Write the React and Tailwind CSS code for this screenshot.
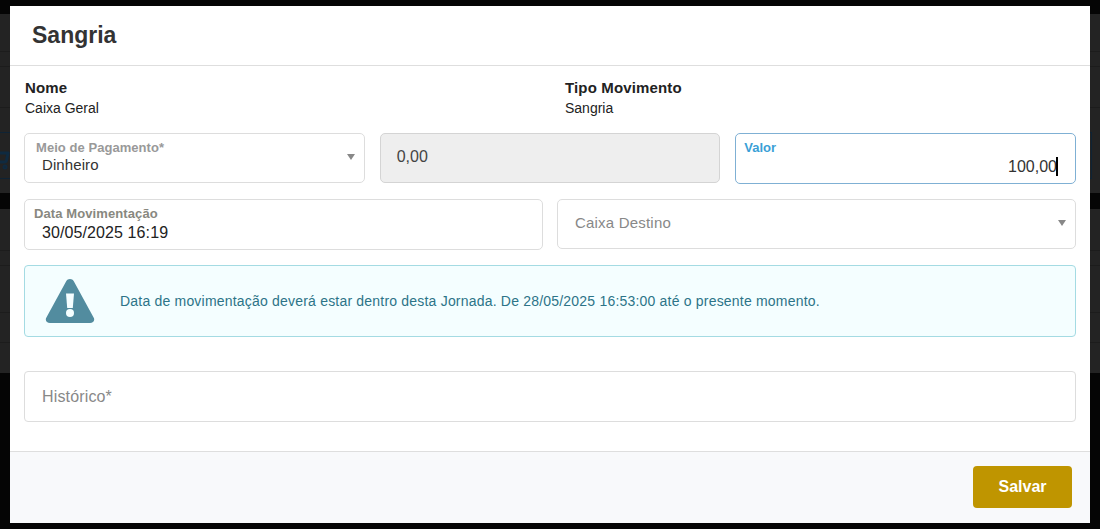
import { ShoppingCart } from "lucide-react";

const Caret = ({ className = "" }) => (
  <svg width="8" height="6" viewBox="0 0 8 6" className={className}>
    <path d="M0 0 H8 L4 6 Z" fill="#888888" />
  </svg>
);

// faixas escuras atras do modal
const bands = [
  "h-[14px] bg-[#050505]",
  "h-[38px] bg-[#232323] border-b border-[#1c1c1c]",
  "h-[15px] bg-[#232323] border-b border-[#1c1c1c]",
  "h-[41px] bg-[#232323] border-b border-[#1c1c1c]",
  "h-[70px] bg-[#232323]",
  "h-[15px] bg-[#232323]",
  "h-[16px] bg-[#050505]",
  "h-[42px] bg-[#232323] border-b border-[#1c1c1c]",
  "h-[15px] bg-[#232323] border-b border-[#1c1c1c]",
  "h-[47px] bg-[#232323] border-b border-[#1c1c1c]",
  "h-[30px] bg-[#232323] border-b border-[#1c1c1c]",
  "h-[30px] bg-[#232323]",
  "h-[156px] bg-[#050505]",
];

const App = () => {
  return (
    <div className="relative h-[529px] w-[1100px] overflow-hidden bg-[#050505] font-['Liberation_Sans',Arial,sans-serif]">
      <div className="absolute inset-0 flex flex-col">
        {bands.map((b, i) => (
          <div key={i} className={b} />
        ))}
      </div>
      <div className="absolute -left-[2px] top-[132px] h-[47px] w-[1094px] border border-[#0f2334]" />
      <ShoppingCart size={24} strokeWidth={3} className="absolute -left-[14px] top-[146px] text-[#0f2a40]" />

      {/* Modal */}
      <div className="absolute left-[10px] top-[6px] flex h-[517px] w-[1080px] flex-col bg-white">
        {/* Header */}
        <div className="flex h-[60px] shrink-0 items-center border-b border-[#dedede] pl-[22px]">
          <h1 className="text-[23px] font-bold leading-none text-[#333]">Sangria</h1>
        </div>

        {/* Body */}
        <div className="flex flex-1 flex-col px-[14px]">
          <div className="mt-[13px] grid grid-cols-2 gap-x-[30px]">
            <div className="pl-px">
              <p className="text-[15px] font-bold leading-[18px] tracking-[0.15px] text-[#222]">Nome</p>
              <p className="mt-[2px] text-[14px] leading-[18px] text-[#222]">Caixa Geral</p>
            </div>
            <div>
              <p className="text-[15px] font-bold leading-[18px] tracking-[0.15px] text-[#222]">Tipo Movimento</p>
              <p className="mt-[2px] text-[14px] leading-[18px] text-[#222]">Sangria</p>
            </div>
          </div>

          {/* Linha 1 */}
          <div className="mt-[16px] grid grid-cols-3 gap-x-[15px]">
            <div className="relative h-[50px] rounded-[5px] border border-[#dddddd] bg-white pl-[11px] pt-[6px]">
              <p className="text-[13px] font-bold leading-[15px] tracking-[0.05px] text-[#999999]">Meio de Pagamento*</p>
              <p className="mt-[1px] pl-[6px] text-[15px] leading-[17px] tracking-[0.1px] text-[#333]">Dinheiro</p>
              <Caret className="absolute right-[9px] top-[20px]" />
            </div>
            <div className="flex h-[50px] items-center rounded-[5px] border border-[#d4d4d4] bg-[#eeeeee] pb-[2px] pl-[16px] text-[16px] text-[#444]">
              0,00
            </div>
            <div className="h-[51px] rounded-[5px] border border-[#7fb0d4] bg-white pl-[8px] pr-[17px] pt-[6px]">
              <p className="text-[13px] font-bold leading-[15px] text-[#3b9fd6]">Valor</p>
              <div className="flex justify-end">
                <span className="text-[16px] leading-[24px] text-[#333]">100,00</span>
                <span className="-ml-[1px] mt-[2px] h-[19px] w-[2px] bg-black" />
              </div>
            </div>
          </div>

          {/* Linha 2 */}
          <div className="mt-[15px] grid grid-cols-2 gap-x-[14px]">
            <div className="h-[51px] rounded-[5px] border border-[#dddddd] bg-white pl-[9px] pt-[6px]">
              <p className="text-[13px] font-bold leading-[15px] tracking-[0.1px] text-[#888880]">Data Movimentação</p>
              <p className="mt-[2px] pl-[8px] text-[16px] leading-[20px] tracking-[0.1px] text-[#222]">30/05/2025 16:19</p>
            </div>
            <div className="relative flex h-[50px] items-center rounded-[5px] border border-[#dddddd] bg-white pb-[2px] pl-[17px] text-[15px] tracking-[0.2px] text-[#888888]">
              Caixa Destino
              <Caret className="absolute right-[9px] top-[20px]" />
            </div>
          </div>

          {/* Alerta */}
          <div className="mt-[15px] flex h-[72px] items-center rounded-[4px] border border-[#a4dbe3] bg-[#f4feff]">
            <svg width="50" height="44" viewBox="0 0 50 44" className="ml-[20px] shrink-0">
              <path
                d="M25 0c1.6 0 3 .9 3.8 2.2l19.8 36.2c1.7 2.9-.4 5.6-3.6 5.6H5c-3.2 0-5.3-2.7-3.6-5.6L21.2 2.2C22 .9 23.4 0 25 0z"
                fill="#528c9f"
              />
              <path d="M21 14.5h8l-1.2 14.5h-5.6z" fill="#f4feff" />
              <circle cx="25" cy="34" r="4" fill="#f4feff" />
            </svg>
            <p className="ml-[25px] text-[14px] tracking-[0.2px] text-[#2c7488]">
              Data de movimentação deverá estar dentro desta Jornada. De 28/05/2025 16:53:00 até o presente momento.
            </p>
          </div>

          {/* Historico */}
          <div className="mt-[34px] flex h-[51px] items-center rounded-[4px] border border-[#dddddd] bg-white pl-[17px] text-[16px] tracking-[0.15px] text-[#888888]">
            Histórico*
          </div>
        </div>

        {/* Footer */}
        <div className="flex h-[72px] shrink-0 items-center justify-end border-t border-[#dedede] bg-[#f8f9fb] pr-[18px]">
          <button className="mt-[-1px] h-[42px] w-[99px] rounded-[4px] bg-[#bf9500] text-[16px] font-bold text-white">
            Salvar
          </button>
        </div>
      </div>
    </div>
  );
};

export default App;
